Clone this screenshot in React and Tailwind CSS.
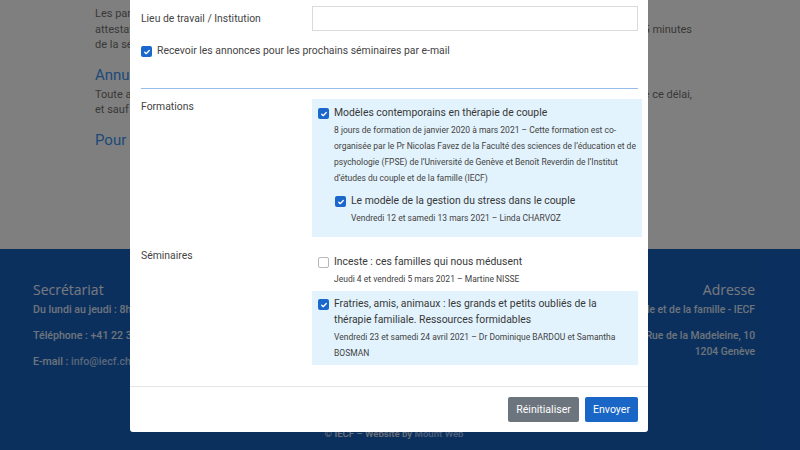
import React from 'react';

const Check = ({ checked }) =>
    checked ? (
        <span className="mt-[3px] flex h-[11px] w-[11px] shrink-0 items-center justify-center rounded-[2px] bg-[#1b68cc]">
            <svg viewBox="0 0 12 12" className="h-[8px] w-[8px]">
                <path d="M2.6 6.3l2.2 2.2 4.6-4.8" fill="none" stroke="white" strokeWidth="2" strokeLinecap="round" strokeLinejoin="round" />
            </svg>
        </span>
    ) : (
        <span className="mt-[3px] h-[11px] w-[11px] shrink-0 rounded-[2px] border border-[#b8b8b8] bg-white" />
    );

const Option = ({ checked, title, sub, className = '', children }) => (
    <div className={`flex gap-[5px] ${className}`}>
        <Check checked={checked} />
        <div className="min-w-0 flex-1">
            <div className="text-[10.4px] leading-[16px] text-[#383838]">{title}</div>
            <div className="mt-px text-[8.5px] leading-[16px] text-[#424242]">{sub}</div>
            {children}
        </div>
    </div>
);

const Modal = () => (
    <div className="absolute left-[130px] top-0 w-[518px] rounded-b-[3px] bg-white text-[10.4px] text-[#444]">
        <div className="pb-[21px] pl-[11px] pr-[10px] pt-[6px]">
            <div className="grid grid-cols-[171px_1fr] items-center">
                <span>Lieu de travail / Institution</span>
                <input className="h-[25px] border border-[#dadada] bg-white px-2 outline-none" />
            </div>

            <label className="mt-[12px] flex gap-[5px] leading-[16px]">
                <Check checked />
                <span>Recevoir les annonces pour les prochains séminaires par e-mail</span>
            </label>

            <div className="mt-[29px] h-px bg-[#96bde9]" />

            {/* Formations */}
            <div className="mt-[10px] grid grid-cols-[171px_1fr]">
                <span className="leading-[16px]">Formations</span>
                <div className="bg-[#e2f3fd] px-[6px] pb-[11px] pt-[6px]">
                    <Option
                        checked
                        title="Modèles contemporains en thérapie de couple"
                        sub={
                            <>
                                <span className="block whitespace-nowrap">8 jours de formation de janvier 2020 à mars 2021 – Cette formation est co-</span>
                                <span className="block whitespace-nowrap">organisée par le Pr Nicolas Favez de la Faculté des sciences de l’éducation et de</span>
                                <span className="block whitespace-nowrap">psychologie (FPSE) de l’Université de Genève et Benoît Reverdin de l’Institut</span>
                                <span className="block whitespace-nowrap">d’études du couple et de la famille (IECF)</span>
                            </>
                        }
                    >
                        <Option
                            checked
                            className="ml-px mt-[7px]"
                            title="Le modèle de la gestion du stress dans le couple"
                            sub="Vendredi 12 et samedi 13 mars 2021 – Linda CHARVOZ"
                        />
                    </Option>
                </div>
            </div>

            {/* Séminaires */}
            <div className="mt-[11px] grid grid-cols-[171px_1fr]">
                <span className="leading-[16px]">Séminaires</span>
                <div>
                    <Option
                        className="px-[6px] pb-[3px] pt-[6px]"
                        title="Inceste : ces familles qui nous médusent"
                        sub="Jeudi 4 et vendredi 5 mars 2021 – Martine NISSE"
                    />
                    <Option
                        checked
                        className="mt-px bg-[#e2f3fd] px-[6px] pb-[4px] pt-[5px]"
                        title="Fratries, amis, animaux : les grands et petits oubliés de la thérapie familiale. Ressources formidables"
                        sub="Vendredi 23 et samedi 24 avril 2021 – Dr Dominique BARDOU et Samantha BOSMAN"
                    />
                </div>
            </div>
        </div>

        <div className="flex justify-end gap-[6px] border-t border-[#e5e5e5] px-[10px] pb-[10px] pt-[10px]">
            <button className="h-[25px] rounded-[2px] bg-[#6c757d] px-[8px] text-[10.6px] text-white">Réinitialiser</button>
            <button className="h-[25px] rounded-[2px] bg-[#1966c6] px-[8px] text-[10.6px] text-white">Envoyer</button>
        </div>
    </div>
);

export default function App() {
    return (
        <div className="relative h-[450px] overflow-hidden bg-white font-['Roboto',sans-serif]">
            {/* page behind the dialog */}
            <div className="h-[249px] pl-[95px] pt-[6px] text-[11px] leading-[15.5px] text-[#727272]">
                <div className="w-[597px]">
                    <p className="whitespace-nowrap">Les participants reçoivent une attestation à la fin de la formation.</p>
                    <p className="flex justify-between whitespace-nowrap">
                        <span>attestation de présence. Les personnes arrivant en retard de plus de</span>
                        <span>15 minutes</span>
                    </p>
                    <p className="whitespace-nowrap">de la séance ne pourront pas y participer.</p>
                    <h2 className="mt-[12px] text-[15px] leading-[20px] text-[#3a92f2]">Annulation</h2>
                    <p className="mt-[2px] flex justify-between whitespace-nowrap">
                        <span>Toute annulation doit nous parvenir par écrit au plus tard 10 jours avant.</span>
                        <span>passé ce délai,</span>
                    </p>
                    <p className="whitespace-nowrap">et sauf cas de force majeure, le montant reste dû.</p>
                    <h2 className="mt-[12px] text-[15px] leading-[20px] text-[#3a92f2]">Pour tout renseignement</h2>
                </div>
            </div>

            <footer className="h-[201px] bg-[#1660bd] pl-[33px] pr-[45px] pt-[32px]">
                <div className="flex justify-between">
                    <div>
                        <h3 className="font-['Open_Sans',sans-serif] text-[14px] leading-[18px] text-[#eef3fc]">Secrétariat</h3>
                        <p className="mt-[3px] text-[10.6px] font-medium leading-[16px] text-[#dde7f6]">Du lundi au jeudi : 8h30 - 12h00</p>
                        <p className="mt-[10px] text-[10.6px] font-medium leading-[16px] text-[#dde7f6]">Téléphone : +41 22 320 91 91</p>
                        <p className="mt-[10px] text-[10.6px] font-medium leading-[16px] text-[#dde7f6]">
                            E-mail : <span className="text-[#b3cdf0]">info@iecf.ch</span>
                        </p>
                    </div>
                    <div className="text-right">
                        <h3 className="font-['Open_Sans',sans-serif] text-[14px] leading-[18px] text-[#eef3fc]">Adresse</h3>
                        <p className="mt-[3px] text-[10.3px] font-medium leading-[16px] text-[#dde7f6]">Institut d’études du couple et de la famille - IECF</p>
                        <p className="mt-[10px] text-[10.3px] font-medium leading-[16px] text-[#dde7f6]">
                            Rue de la Madeleine, 10
                            <br />
                            1204 Genève
                        </p>
                    </div>
                </div>
                <p className="mt-[56px] text-center text-[9.6px] font-semibold leading-[16px] text-[#d3dff0]">
                    © IECF – Website by <span className="text-[#97bdf5]">Mount Web</span>
                </p>
            </footer>

            <div className="absolute inset-0 bg-black/50" />
            <Modal />
        </div>
    );
}
